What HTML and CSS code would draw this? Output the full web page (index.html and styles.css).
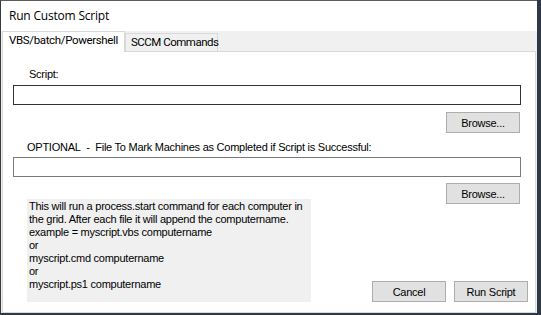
FILE: index.html
```html
<!DOCTYPE html>
<html>
<head>
  <meta charset="UTF-8">
  <title>Run Custom Script</title>
  <link rel="stylesheet" href="styles.css">
</head>
<body>
  <div class="window">
    <div class="titlebar">Run Custom Script</div>

    <div class="tabs">
      <div class="tab active">VBS/batch/Powershell</div>
      <div class="tab tab-sccm">SCCM Commands</div>
    </div>

    <div class="panel">
      <div class="label label-script">Script:</div>
      <div class="field field-focus"></div>
      <div class="row-browse">
        <button class="btn">Browse...</button>
      </div>

      <div class="label label-optional">OPTIONAL&nbsp; -&nbsp; File To Mark Machines as Completed if Script is Successful:</div>
      <div class="field"></div>

      <div class="lower">
        <div class="info">
          This will run a process.start command for each computer in<br>
          the grid. After each file it will append the computername.<br>
          example = myscript.vbs computername<br>
          or<br>
          myscript.cmd computername<br>
          or<br>
          myscript.ps1 computername
        </div>
        <div class="actions">
          <button class="btn btn-browse">Browse...</button>
          <div class="buttons">
            <button class="btn">Cancel</button>
            <button class="btn">Run Script</button>
          </div>
        </div>
      </div>
    </div>
  </div>
</body>
</html>
```

FILE: styles.css
```css
body {
  margin: 0;
  width: 541px;
  height: 315px;
  overflow: hidden;
  background: #2f3946;
  font-family: "Liberation Sans", Arial, sans-serif;
  font-size: 11px;
  letter-spacing: -0.25px;
  color: #000;
}
.window {
  width: 537px;
  height: 313px;
  box-sizing: border-box;
  background: #f0f0f0;
  border-top: 1px solid #5c5c5c;
  border-left: 1px solid #3c3c3c;
  display: flex;
  flex-direction: column;
}
.titlebar {
  height: 30px;
  line-height: 29px;
  padding-left: 8px;
  background: #fff;
  font-family: "Open Sans", sans-serif;
  font-size: 12px;
  letter-spacing: -0.2px;
}
.tabs {
  height: 20px;
  display: flex;
  align-items: flex-end;
  padding-left: 1px;
  font-family: Roboto, sans-serif;
  font-size: 11.5px;
  letter-spacing: 0;
}
.tab {
  height: 18px;
  line-height: 17px;
  box-sizing: border-box;
  padding: 0 0 0 4px;
  border: 1px solid #d9d9d9;
  border-bottom: none;
  background: #f0f0f0;
  width: 93px;
  white-space: nowrap;
}
.tab-sccm {
  padding-left: 5px;
  letter-spacing: -0.5px;
}
.tab.active {
  height: 21px;
  line-height: 17px;
  width: 123px;
  margin-bottom: -1px;
  background: #fff;
  position: relative;
  z-index: 1;
  padding-left: 6px;
  letter-spacing: -0.35px;
}
.panel {
  margin-left: 1px;
  width: 534px;
  flex: 1;
  box-sizing: border-box;
  background: #fff;
  border: 1px solid #d9d9d9;
  padding-bottom: 10px;
  display: flex;
  flex-direction: column;
}
.label {
  line-height: 13px;
  white-space: nowrap;
}
.label-script {
  margin: 16px 0 0 26px;
}
.label-optional {
  margin: 8px 0 0 24px;
}
.field {
  height: 20px;
  box-sizing: border-box;
  margin: 3px 14px 0 10px;
  border: 1px solid #7a7a7a;
  background: #fff;
}
.field-focus {
  margin-top: 4px;
  border-color: #333;
}
.row-browse {
  display: flex;
  justify-content: flex-end;
  margin: 7px 15px 0 0;
}
.btn {
  width: 74px;
  height: 21px;
  box-sizing: border-box;
  padding: 0;
  background: #e1e1e1;
  border: 1px solid #adadad;
  font-family: "Liberation Sans", Arial, sans-serif;
  font-size: 11px;
  letter-spacing: -0.25px;
  color: #000;
}
.lower {
  display: flex;
}
.info {
  margin: 22px 0 0 24px;
  width: 284px;
  height: 103px;
  box-sizing: border-box;
  padding: 1px 2px;
  background: #f0f0f0;
  line-height: 13px;
  white-space: nowrap;
}
.actions {
  margin-left: auto;
  margin-right: 7px;
  display: flex;
  flex-direction: column;
  align-items: flex-end;
}
.btn-browse {
  margin: 6px 8px 0 0;
}
.buttons {
  margin-top: auto;
  display: flex;
  gap: 8px;
}
```
